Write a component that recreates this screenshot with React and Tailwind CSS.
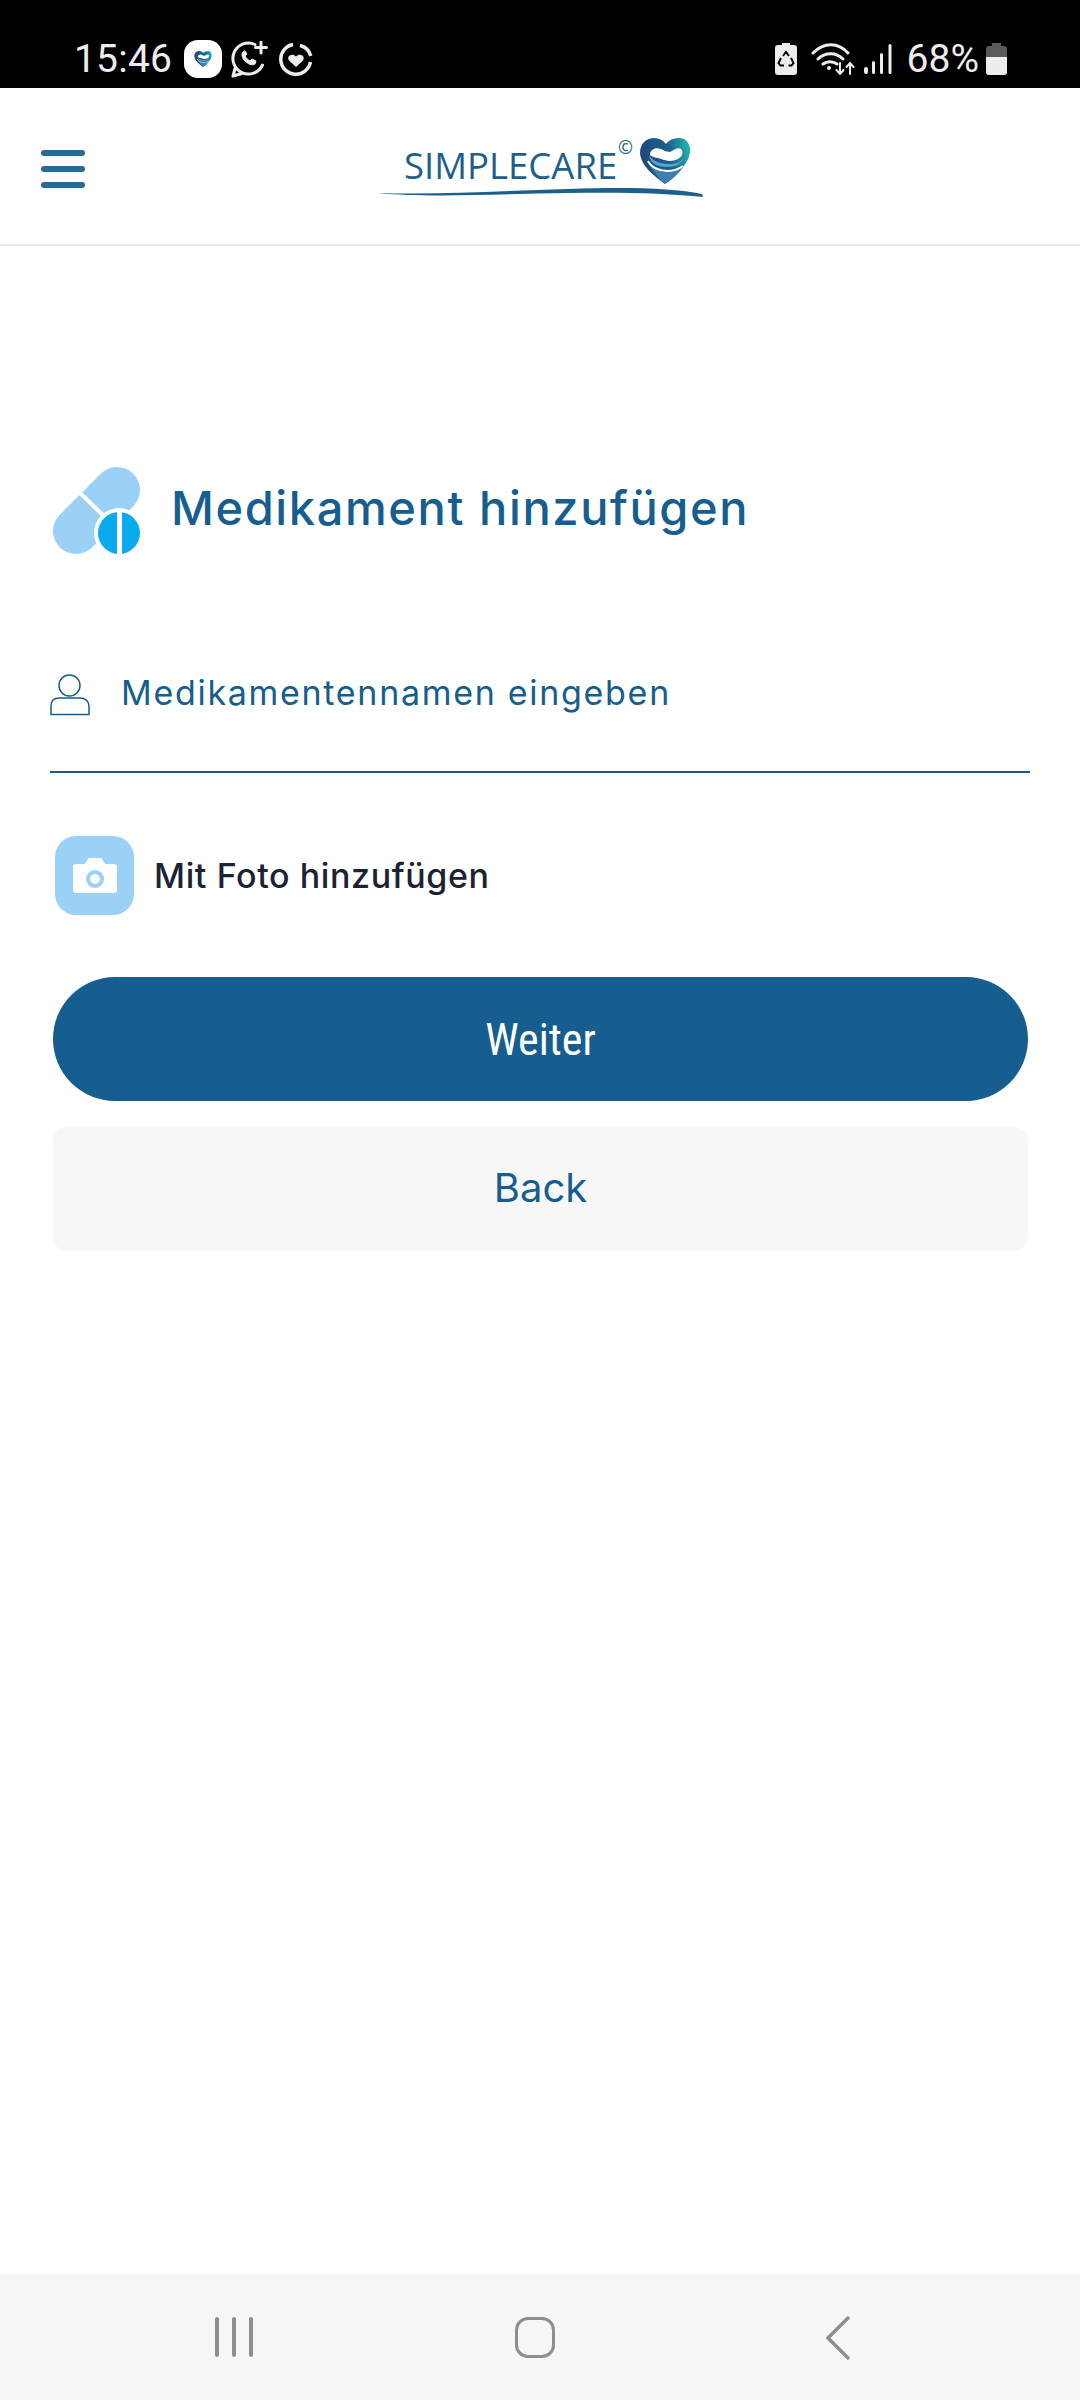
const C = "#155e8f";
const font = { fontFamily: '"Inter","Noto Sans",sans-serif' };

function Heart({ size = 52 }) {
  return (
    <svg width={size} height={size} viewBox="0 0 52 48" className="block">
      <defs>
        <linearGradient id="hg" x1="0" x2="1" y1="0.2" y2="0">
          <stop offset="0" stopColor="#1f4a7d" />
          <stop offset="0.55" stopColor="#1f5f8d" />
          <stop offset="1" stopColor="#1fc0b4" />
        </linearGradient>
      </defs>
      <path d="M26 47C17 40 2 30 1 16 1 6 8 1 15 1c5 0 9 2 12 6 3-4 8-6 13-6 7 0 12 6 11 14-1 12-15 25-25 32z" fill="url(#hg)" />
      <path d="M11 18c0-6 6-8 11-6 4 2 7 4 11 2 3-2 6-4 9-2 3 3 1 8-3 10-6 3-12 2-17 0-4-2-8-1-11-4z" fill="#fff" />
      <path d="M10 18c4 7 13 9 21 9 6 0 11-2 14-7-2 6-7 10-16 10C19 30 11 27 10 18z" fill="#4ba6d0" />
      <path d="M10 27c5 5 11 8 18 8 6 0 11-1 16-5-4 6-11 13-18 17C20 42 14 34 10 27z" fill="#3f7fb0" />
      <path d="M9 24c3 6 11 10 19 10 7 0 12-2 16-5" fill="none" stroke="#fff" strokeWidth="2" />
    </svg>
  );
}

function StatusBar() {
  return (
    <div className="h-[88px] bg-black flex items-end justify-between pl-[74px] pr-[73px] pb-[9px] text-[#ededed]" style={{ fontFamily: "Roboto, sans-serif" }}>
      <div className="flex items-center">
        <span className="text-[39px] leading-[40px] tracking-[0.2px]">15:46</span>
        <div className="ml-[12px] w-[38px] h-[38px] rounded-[14px] bg-white flex items-center justify-center">
          <Heart size={18} />
        </div>
        <svg width="37" height="37" viewBox="0 0 37 37" className="ml-[9px]" fill="none" stroke="#ededed" strokeWidth="3" strokeLinecap="round">
          <path d="M24 3.500A15.500 15.500 0 1 0 31.500 24M2 35l2.500-9M2 35l9-2.500" />
          <path d="M30 1v11M24.500 6.500h11" />
          <path d="M12 11c-2 2-1 6 2 9s7 5 10 3l1-3-4-2-2 2c-2-1-4-3-5-5l2-2-2-3z" fill="#ededed" strokeWidth="1" />
        </svg>
        <svg width="34" height="34" viewBox="0 0 34 34" className="ml-[11px]" fill="none" stroke="#ededed" strokeWidth="3.500">
          <path d="M14 2.500A15 15 0 1 0 31.500 20M21 3.500A15 15 0 0 1 31.800 14" />
          <path d="M17 25l-7-6.500c-3-4 3-8 7-4 4-4 10 0 7 4z" fill="#ededed" stroke="none" />
        </svg>
      </div>
      <div className="flex items-center">
        <svg width="22" height="32" viewBox="0 0 22 32">
          <path d="M7 0h8v2h4a3 3 0 0 1 3 3v24a3 3 0 0 1-3 3H3a3 3 0 0 1-3-3V5a3 3 0 0 1 3-3h4z" fill="#ededed" />
          <path d="M8 13l3-4 3 4M16 15l2.500 5-2 2.500h-3M9 22.500H5.500l-2-2.500 2.500-5" fill="none" stroke="#000" strokeWidth="2" />
        </svg>
        <svg width="44" height="32" viewBox="0 0 44 32" className="ml-[14px]" fill="none" stroke="#ededed" strokeWidth="3" strokeLinecap="round">
          <path d="M2 10c11-11 25-11 35 0M7 16c7-7 18-7 25 0M12 21c4-3 10-3 14 0" />
          <circle cx="18" cy="25" r="2" fill="#ededed" stroke="none" />
          <path d="M29 20v11M25.500 27l3.500 4 3.500-4M39 31V20M35.500 24l3.500-4 3.500 4" strokeWidth="2" />
        </svg>
        <svg width="28" height="30" viewBox="0 0 28 30" className="ml-[9px]" fill="#ededed">
          <rect x="0" y="23" width="4" height="7" rx="2" />
          <rect x="8" y="17" width="3" height="13" rx="1.500" />
          <rect x="16" y="9" width="3" height="21" rx="1.500" />
          <rect x="24.500" y="0" width="3" height="30" rx="1.500" />
        </svg>
        <span className="ml-[15px] text-[39px] leading-[40px]">68%</span>
        <svg width="21" height="32" viewBox="0 0 21 32" className="ml-[7px]">
          <path d="M6 0h9v3h3a3 3 0 0 1 3 3v23a3 3 0 0 1-3 3H3a3 3 0 0 1-3-3V6a3 3 0 0 1 3-3h3z" fill="#5a5a5a" />
          <path d="M0 14h21v15a3 3 0 0 1-3 3H3a3 3 0 0 1-3-3z" fill="#ededed" />
        </svg>
      </div>
    </div>
  );
}

function Header() {
  return (
    <header className="relative h-[158px] bg-white border-b-2 border-[#e8e8e8] flex items-start pl-[41px] pt-[62px]">
      <div className="w-[44px] flex flex-col gap-[10px]">
        <div className="h-[6px] rounded-[3px] bg-[#256c9b]" />
        <div className="h-[6px] rounded-[3px] bg-[#256c9b]" />
        <div className="h-[6px] rounded-[3px] bg-[#256c9b]" />
      </div>
      <div className="absolute left-[378px] top-[47px] w-[326px] h-[60px]">
        <div className="absolute left-[26px] top-[5px] text-[36.500px] leading-[50px] text-[#1d5f8c] whitespace-nowrap" style={{ fontFamily: '"Open Sans",sans-serif' }}>SIMPLECARE</div>
        <div className="absolute left-[240px] top-[2px] text-[18px] leading-[20px] text-[#1d5f8c]" style={{ fontFamily: '"Open Sans",sans-serif' }}>©</div>
        <div className="absolute left-[261px] top-0"><Heart size={52} /></div>
        <svg width="326" height="16" viewBox="0 0 326 16" className="absolute left-0 top-[51px]">
          <path d="M0 7C60 9 120 5 190 3c60-2 105-1 134 5l1 3C290 7 240 6 190 7 120 8 50 12 0 7z" fill="#1d5f8c" />
        </svg>
      </div>
    </header>
  );
}

function PillIcon() {
  return (
    <svg width="87" height="87" viewBox="0 0 87 87" className="block">
      <path d="M23 64L64 23" stroke="#9bd0f7" strokeWidth="46" strokeLinecap="round" />
      <path d="M26 25L52 50" stroke="#fff" strokeWidth="4" />
      <circle cx="66" cy="66" r="25" fill="#fff" />
      <circle cx="66" cy="66" r="21" fill="#0aaaef" />
      <rect x="64" y="42" width="5" height="46" fill="#fff" />
    </svg>
  );
}

function UserIcon() {
  return (
    <svg width="40" height="42" viewBox="0 0 40 42" fill="none" stroke={C} strokeWidth="1.500" className="block">
      <circle cx="19.500" cy="11.500" r="10.500" />
      <path d="M1 40.500V32c0-5 3-8 8-8h21c5 0 9 3 9 8v8.500z" />
    </svg>
  );
}

function CameraTile() {
  return (
    <div className="w-[79px] h-[79px] rounded-[21px] bg-[#9bd0f7] flex items-center justify-center">
      <svg width="44" height="36" viewBox="0 0 44 36" className="block">
        <path d="M3 6h9l3-5c.5-1 1-1 2-1h10c1 0 1.500 0 2 1l3 5h9a3 3 0 0 1 3 3v23a3 3 0 0 1-3 3H3a3 3 0 0 1-3-3V9a3 3 0 0 1 3-3z" fill="#fff" />
        <circle cx="22" cy="21" r="9" fill="#9bd0f7" />
        <circle cx="22" cy="21" r="5" fill="#fff" />
      </svg>
    </div>
  );
}

function NavBar() {
  return (
    <div className="h-[126px] bg-[#f6f6f6] flex items-start pt-[43px] pl-[215px]">
      <div className="flex gap-[13px]">
        <div className="w-[4px] h-[40px] rounded-full bg-[#8e8e8e]" />
        <div className="w-[4px] h-[40px] rounded-full bg-[#8e8e8e]" />
        <div className="w-[4px] h-[40px] rounded-full bg-[#8e8e8e]" />
      </div>
      <div className="ml-[262px] w-[40px] h-[41px] rounded-[13px] border-[3.500px] border-[#8e8e8e]" />
      <svg width="24" height="44" viewBox="0 0 24 44" className="ml-[271px] -mt-[1px]" fill="none" stroke="#8e8e8e" strokeWidth="3.500" strokeLinecap="round" strokeLinejoin="round">
        <path d="M22 2L2 22l20 20" />
      </svg>
    </div>
  );
}

export default function App() {
  return (
    <div className="w-[1080px] h-[2400px] flex flex-col bg-white overflow-hidden">
      <StatusBar />
      <Header />
      <main className="flex-1 flex flex-col px-[50px]" style={font}>
        <div className="mt-[221px] ml-[3px] flex items-center">
          <PillIcon />
          <h1 className="ml-[31px] pb-[6px] text-[47px] leading-[60px] tracking-[1.6px] font-medium whitespace-nowrap text-[#155e8f]">Medikament hinzufügen</h1>
        </div>
        <div className="mt-[63px] h-[156px] border-b-2 border-[#155e8f] flex items-start">
          <div className="mt-[57px]"><UserIcon /></div>
          <span className="ml-[31px] mt-[54px] text-[34px] leading-[44px] tracking-[1.7px] text-[#155e8f] whitespace-nowrap">Medikamentennamen eingeben</span>
        </div>
        <div className="mt-[63px] ml-[5px] flex items-center">
          <CameraTile />
          <span className="ml-[20px] text-[34px] leading-[44px] tracking-[0.6px] font-medium text-[#1a2233] whitespace-nowrap">Mit Foto hinzufügen</span>
        </div>
        <button className="mt-[62px] ml-[3px] mr-[2px] h-[124px] pt-[2px] rounded-[62px] bg-[#155e8f] text-white text-[44px]" style={{ fontFamily: "Roboto, sans-serif", fontStretch: "75%" }}>Weiter</button>
        <button className="mt-[26px] ml-[3px] mr-[2px] h-[124px] pb-[3px] rounded-[14px] bg-[#f7f7f7] text-[#155e8f] text-[40px]">Back</button>
      </main>
      <NavBar />
    </div>
  );
}
